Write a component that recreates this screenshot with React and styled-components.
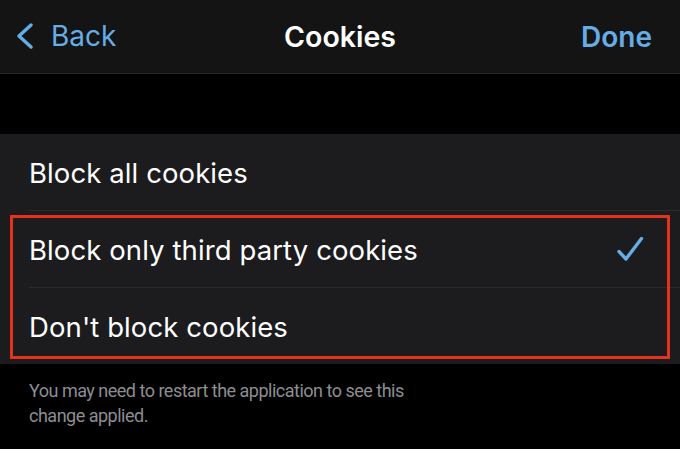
import styled, { createGlobalStyle } from "styled-components";

const GlobalStyle = createGlobalStyle`
  html, body {
    margin: 0;
    padding: 0;
    background: #000000;
  }
  body {
    font-family: Inter, "Noto Sans", sans-serif;
    -webkit-font-smoothing: antialiased;
  }
`;

const options = [
  { label: "Block all cookies" },
  { label: "Block only third party cookies", checked: true },
  { label: "Don't block cookies" },
];

const Check = () => (
  <svg width="28" height="26" viewBox="0 0 28 26" fill="none">
    <path
      d="M3 15.5 L10 23 L25.5 2.5"
      stroke="#65ade6"
      strokeWidth="3.4"
      strokeLinecap="round"
      strokeLinejoin="round"
    />
  </svg>
);

const Chevron = () => (
  <svg width="22" height="26" viewBox="0 0 22 26" fill="none">
    <path
      d="M17 2 L5 13 L17 24"
      stroke="#65ade6"
      strokeWidth="3.4"
      strokeLinecap="round"
      strokeLinejoin="round"
    />
  </svg>
);

export default function App() {
  return (
    <>
      <GlobalStyle />
      <Screen>
        <NavBar>
          <BackButton>
            <Chevron />
            <span>Back</span>
          </BackButton>
          <Title>Cookies</Title>
          <DoneButton>Done</DoneButton>
        </NavBar>
        <Spacer />
        <Group>
          {options.map((o, i) => (
            <Row key={o.label} $last={i === options.length - 1}>
              <RowLabel>{o.label}</RowLabel>
              {o.checked && <Check />}
            </Row>
          ))}
          <Highlight />
        </Group>
        <Footer>
          You may need to restart the application to see this
          <br />
          change applied.
        </Footer>
      </Screen>
    </>
  );
}

const Screen = styled.div`
  width: 680px;
  height: 449px;
  background: #000000;
  overflow: hidden;
`;

const NavBar = styled.div`
  height: 73px;
  background: #141414;
  border-bottom: 1px solid #282828;
  display: grid;
  grid-template-columns: 1fr auto 1fr;
  align-items: center;
  padding: 0 28px 0 14px;
`;

const BackButton = styled.div`
  display: flex;
  align-items: center;
  gap: 15px;
  color: #65ade6;
  font-size: 28px;
  padding-bottom: 1px;
`;

const Title = styled.div`
  color: #ffffff;
  font-size: 28.5px;
  font-weight: 600;
  margin-left: 14px;
`;

const DoneButton = styled.div`
  justify-self: end;
  color: #65ade6;
  font-size: 28px;
  font-weight: 600;
`;

const Spacer = styled.div`
  height: 60px;
`;

const Group = styled.div`
  position: relative;
  background: #1c1c1e;
`;

const Row = styled.div`
  height: 76px;
  margin-left: 29px;
  padding-right: 36px;
  display: flex;
  align-items: center;
  justify-content: space-between;
  border-bottom: ${(p) => (p.$last ? "none" : "1px solid #2c2c2e")};
`;

const RowLabel = styled.div`
  color: #ffffff;
  font-size: 27.5px;
  letter-spacing: 0.1px;
  padding-top: 2px;
`;

const Highlight = styled.div`
  position: absolute;
  left: 10px;
  right: 10px;
  top: 81px;
  bottom: 5px;
  border: 3px solid #e4321c;
  pointer-events: none;
`;

const Footer = styled.div`
  padding: 14px 29px 0;
  color: #8d8d92;
  font-size: 18px;
  letter-spacing: -0.5px;
  line-height: 25px;
  font-family: Roboto, "Noto Sans", sans-serif;
`;
